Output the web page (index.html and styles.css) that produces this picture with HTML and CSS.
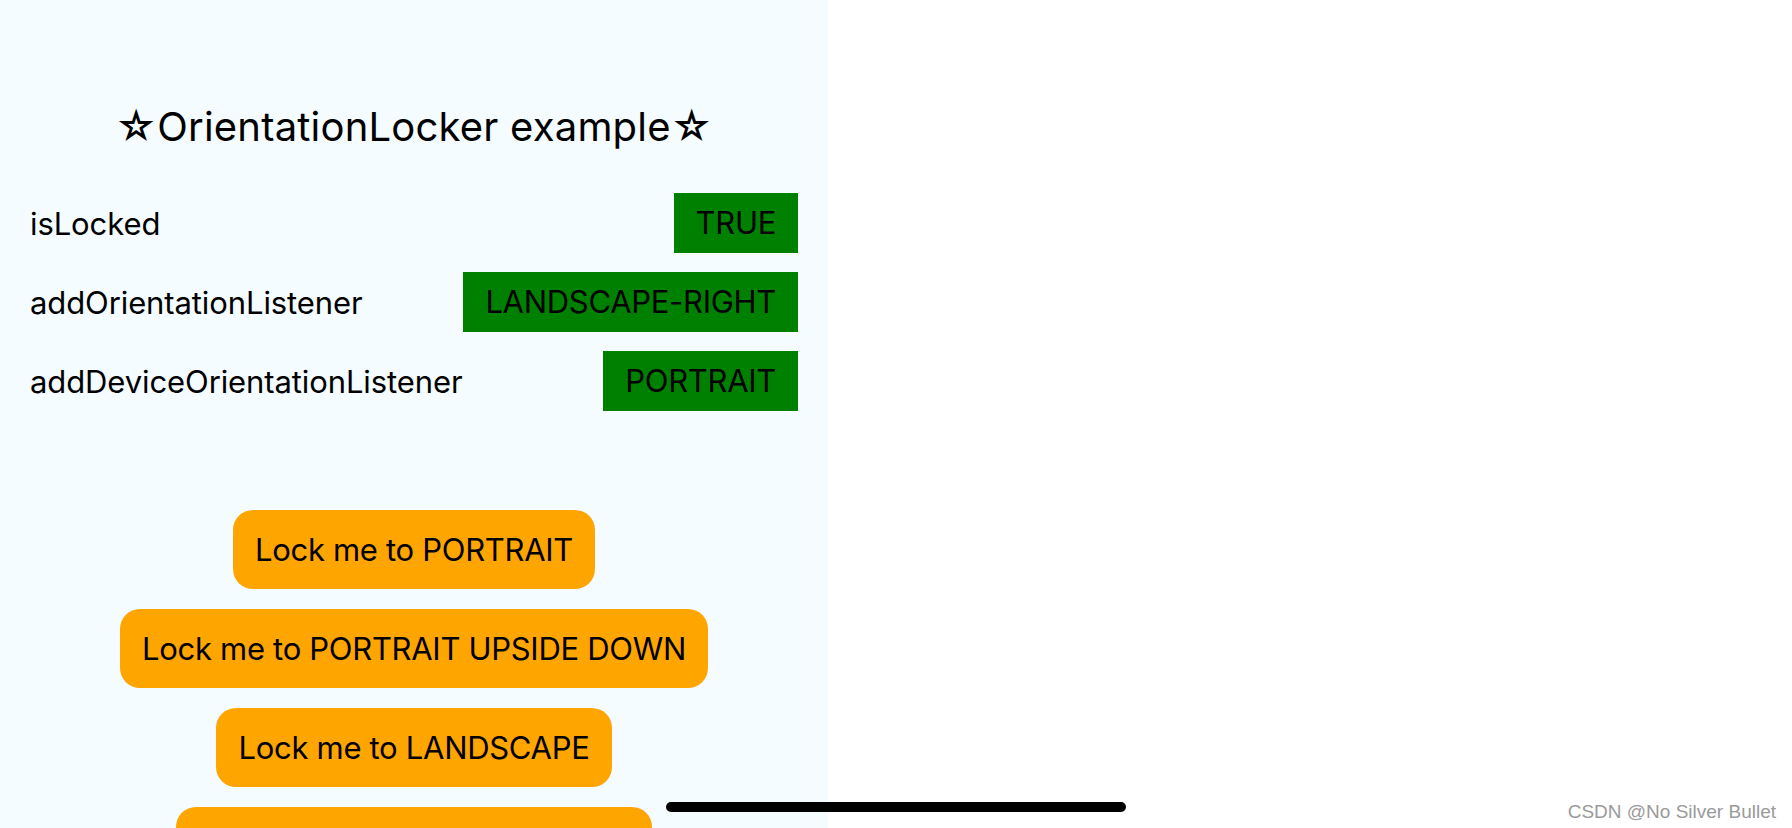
FILE: index.html
```html
<!DOCTYPE html>
<html lang="en">
  <head>
    <meta charset="UTF-8" />
    <meta name="viewport" content="width=device-width, initial-scale=1.0" />
    <title>OrientationLocker example</title>
    <link rel="stylesheet" href="styles.css">
  </head>
  <body>
    <div class="screen">
      <div class="container">
        <h1 class="welcome">☆OrientationLocker example☆</h1>

        <div class="row">
          <span class="label">isLocked</span>
          <span class="value">TRUE</span>
        </div>
        <div class="row">
          <span class="label">addOrientationListener</span>
          <span class="value">LANDSCAPE-RIGHT</span>
        </div>
        <div class="row">
          <span class="label">addDeviceOrientationListener</span>
          <span class="value">PORTRAIT</span>
        </div>

        <div class="buttons">
          <button class="lock">Lock me to PORTRAIT</button>
          <button class="lock">Lock me to PORTRAIT UPSIDE DOWN</button>
          <button class="lock">Lock me to LANDSCAPE</button>
          <button class="lock">Lock me to LANDSCAPE LEFT</button>
        </div>
      </div>
    </div>

    <div class="home-indicator"></div>
    <div class="watermark">CSDN @No Silver Bullet</div>
  </body>
</html>
```

FILE: styles.css
```css
html,
body {
  margin: 0;
  padding: 0;
  height: 100%;
  overflow: hidden;
}

body {
  font-family: Inter, "Noto Sans", sans-serif;
  background-color: #fff;
  color: #000;
}

.screen {
  display: flex;
  height: 100%;
}

.container {
  width: 828px;
  height: 100%;
  box-sizing: border-box;
  padding: 103px 30px 0 30px;
  background-color: #f5fcff;
  display: flex;
  flex-direction: column;
}

.welcome {
  margin: 0 0 42px 0;
  font-size: 40px;
  font-weight: 400;
  line-height: 48px;
  text-align: center;
  letter-spacing: 0.2px;
}

.row {
  display: flex;
  justify-content: space-between;
  align-items: center;
  height: 60px;
  margin-bottom: 19px;
  font-size: 31px;
}

.label {
  letter-spacing: -0.1px;
}

.value {
  height: 60px;
  line-height: 60px;
  padding: 0 22px;
  background-color: #008000;
  letter-spacing: -0.3px;
}

.buttons {
  margin-top: 80px;
  display: flex;
  flex-direction: column;
  align-items: center;
  gap: 20px;
}

.lock {
  height: 79px;
  padding: 0 22px;
  border: none;
  border-radius: 20px;
  background-color: #ffa500;
  color: #000;
  font-family: inherit;
  font-size: 31px;
  letter-spacing: -0.3px;
  flex-shrink: 0;
}

.home-indicator {
  position: absolute;
  left: 666px;
  bottom: 16px;
  width: 460px;
  height: 10px;
  border-radius: 5px;
  background-color: #000;
}

.watermark {
  position: absolute;
  right: 16px;
  bottom: 5px;
  font-family: "Liberation Sans", Arial, sans-serif;
  font-size: 19px;
  color: #9a9a9a;
}
```
